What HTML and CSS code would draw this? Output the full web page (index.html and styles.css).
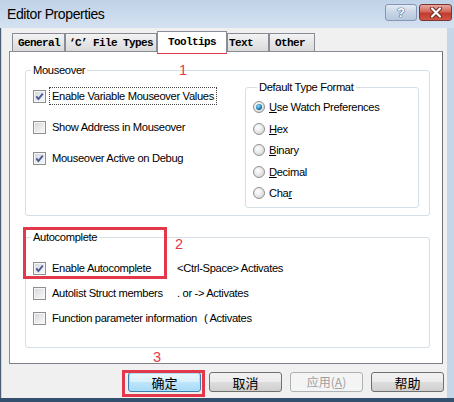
FILE: index.html
```html
<!DOCTYPE html>
<html lang="en">
<head>
<meta charset="utf-8">
<title>Editor Properties</title>
<link rel="stylesheet" href="styles.css">
</head>
<body>
<div class="window">
  <header class="titlebar">
    <span class="title">Editor Properties</span>
    <div class="caption">
      <span class="cap-btn help">?</span>
      <span class="cap-btn close">
        <svg width="14" height="11" viewBox="0 0 14 11"><path d="M3 1.5 L11 9.5 M11 1.5 L3 9.5" stroke="#6b2a22" stroke-width="4" stroke-linecap="round"/><path d="M3 1.5 L11 9.5 M11 1.5 L3 9.5" stroke="#fff" stroke-width="2.2" stroke-linecap="round"/></svg>
      </span>
    </div>
  </header>
  <main class="client">
    <nav class="tabs">
      <span class="tab t-general">General</span>
      <span class="tab t-cfile">‘C’ File Types</span>
      <span class="tab selected">Tooltips</span>
      <span class="tab t-text">Text</span>
      <span class="tab t-other">Other</span>
    </nav>
    <section class="panel">
      <fieldset class="group mouseover">
        <legend class="legend">Mouseover</legend>
        <div class="mo-body">
          <div class="checks">
            <div class="row"><span class="box checked"><svg width="11" height="11" viewBox="0 0 11 11"><path d="M2.3 5.4 L4.4 8 L8.8 2.6" fill="none" stroke="#4a5a98" stroke-width="1.9"/></svg></span><span class="lbl focus">Enable Variable Mouseover Values</span></div>
            <div class="row"><span class="box"></span><span class="lbl">Show Address in Mouseover</span></div>
            <div class="row"><span class="box checked"><svg width="11" height="11" viewBox="0 0 11 11"><path d="M2.3 5.4 L4.4 8 L8.8 2.6" fill="none" stroke="#4a5a98" stroke-width="1.9"/></svg></span><span class="lbl">Mouseover Active on Debug</span></div>
          </div>
          <fieldset class="group format">
            <legend class="legend">Default Type Format</legend>
            <div class="radio-row"><span class="radio on"></span><span class="rlbl"><u>U</u>se Watch Preferences</span></div>
            <div class="radio-row"><span class="radio"></span><span class="rlbl"><u>H</u>ex</span></div>
            <div class="radio-row"><span class="radio"></span><span class="rlbl"><u>B</u>inary</span></div>
            <div class="radio-row"><span class="radio"></span><span class="rlbl"><u>D</u>ecimal</span></div>
            <div class="radio-row"><span class="radio"></span><span class="rlbl">Cha<u>r</u></span></div>
          </fieldset>
        </div>
      </fieldset>
      <fieldset class="group autocomplete">
        <legend class="legend">Autocomplete</legend>
        <div class="checks ac">
          <div class="row"><span class="check"><span class="box checked"><svg width="11" height="11" viewBox="0 0 11 11"><path d="M2.3 5.4 L4.4 8 L8.8 2.6" fill="none" stroke="#4a5a98" stroke-width="1.9"/></svg></span><span class="lbl">Enable Autocomplete</span></span><span class="hint">&lt;Ctrl-Space&gt; Activates</span></div>
          <div class="row"><span class="check"><span class="box"></span><span class="lbl">Autolist Struct members</span></span><span class="hint">. or -&gt; Activates</span></div>
          <div class="row"><span class="check"><span class="box"></span><span class="lbl">Function parameter information</span></span><span class="hint after">( Activates</span></div>
        </div>
      </fieldset>
    </section>
    <footer class="buttons">
      <span class="btn default">确定</span>
      <span class="btn">取消</span>
      <span class="btn disabled">应用(<u>A</u>)</span>
      <span class="btn">帮助</span>
    </footer>
  </main>
  <span class="note n1">1</span>
  <span class="note n2">2</span>
  <span class="note n3">3</span>
  <span class="mark mark-tab"></span>
  <span class="mark mark-ac"></span>
  <span class="mark mark-ok"></span>
</div>
</body>
</html>
```

FILE: styles.css
```css
* { box-sizing: border-box; }
html, body { margin: 0; padding: 0; }
body { width: 454px; height: 402px; overflow: hidden; background: #f0f0f0; }

.window {
  position: relative;
  width: 454px;
  height: 402px;
  display: flex;
  flex-direction: column;
  background: linear-gradient(90deg, #4a5d74 0, #4a5d74 1px, #c6d6e9 1px);
  border-bottom: 4px solid #33506f;
  font-family: "Liberation Sans", Arial, sans-serif;
  font-size: 11.2px;
  letter-spacing: -0.35px;
  color: #000;
}

/* title bar */
.titlebar {
  height: 28px;
  flex: none;
  display: flex;
  justify-content: space-between;
  padding: 0 2px 0 7px;
  background: linear-gradient(#c0d2e8, #d4e1f1);
}
.title { font-size: 14px; letter-spacing: -0.4px; line-height: 29px; }
.caption { display: flex; gap: 2px; margin-top: 4px; height: 17px; }
.cap-btn {
  display: flex; align-items: center; justify-content: center;
  height: 17px; border-radius: 3px;
}
.help {
  width: 32px;
  border: 1px solid #8496b0;
  background: linear-gradient(#e4ebf4, #c7d5e6 50%, #b6c8de);
  color: #fff; font: bold 13px "Liberation Sans", Arial, sans-serif;
  letter-spacing: 0;
  text-shadow: 0 0 1px #3f5473, 0 0 1px #3f5473, 0 0 1px #3f5473;
}
.close {
  width: 33px;
  border: 1px solid #7a3530;
  background: linear-gradient(#e8a89c, #d2675a 45%, #c23a2c 55%, #cf5646);
}

/* client area */
.client {
  flex: 1;
  display: flex;
  flex-direction: column;
  margin: 0 7px 0 2px;
  background: #f0f0f0;
}

.tabs {
  display: flex;
  align-items: flex-end;
  height: 21px;
  margin: 3px 0 -1px 10px;
  position: relative;
  z-index: 1;
  font-family: "Liberation Mono", "Courier New", monospace;
  font-size: 11px;
  font-weight: bold;
  letter-spacing: -0.6px;
}
.tab {
  height: 19px;
  padding: 3px 0 0 5px;
  border: 1px solid #898c95;
  background: linear-gradient(#f3f3f3, #e6e6e6 50%, #dadada);
  white-space: nowrap;
}
.t-general { width: 53px; }
.t-cfile { width: 92px; padding-left: 3px; }
.tab.selected {
  width: 70px;
  height: 22px;
  margin-bottom: -1px;
  padding: 4px 0 0 10px;
  background: #fff;
  border-bottom: none;
}
.t-text { width: 42px; padding-left: 1px; }
.t-other { width: 46px; }

.panel {
  margin: 0 4px 0 7px;
  border: 1px solid #898c95;
  border-right-color: #6e727a;
  border-bottom-color: #7d8189;
  background: #fff;
  padding: 11px 12px 15px 15px;
}

.group {
  margin: 0;
  border: 1px solid #d5dfe5;
  border-radius: 3px;
  padding: 0;
  min-width: 0;
}
.legend {
  margin-left: 5px;
  padding: 0 2px;
  line-height: 14px;
}
.mo-body { display: flex; align-items: flex-start; }
.checks { padding: 9px 0 0 7px; display: flex; flex-direction: column; gap: 11px; }
.row { display: flex; align-items: center; height: 20px; white-space: nowrap; }
.check { display: flex; align-items: center; min-width: 144px; }
.box {
  flex: none;
  width: 13px; height: 13px;
  border: 1px solid #8f8f8f;
  background: linear-gradient(135deg, #d2d5da, #eff0f1 70%, #f8f8f8);
  box-shadow: inset 0 0 0 1px #f6f6f6;
  display: flex; align-items: center; justify-content: center;
}
.lbl {
  margin-left: 3px;
  padding: 1px 2px;
  border: 1px solid transparent;
  line-height: 14px;
}
.lbl.focus { border: 1px dotted #444; }
.hint { line-height: 14px; }
.hint.after { margin-left: 4px; }

.format {
  width: 174px;
  margin: 3px 10px 7px auto;
  padding: 2.25px 0 3.25px 7px;
}
.format .legend { margin-left: 4px; }
.radio-row { display: flex; align-items: center; height: 21.5px; }
.radio {
  flex: none;
  width: 12px; height: 12px;
  border-radius: 50%;
  border: 1px solid #909090;
  background: radial-gradient(circle at 40% 35%, #ffffff, #e2e2e2 60%, #c9c9c9);
  display: flex; align-items: center; justify-content: center;
}
.radio.on::after {
  content: "";
  width: 6px; height: 6px; border-radius: 50%;
  background: radial-gradient(circle at 40% 35%, #9adcf7, #1a7fb8 55%, #0e3d63);
}
.rlbl { margin-left: 4px; line-height: 14px; }

.autocomplete { margin-top: 14px; padding-bottom: 19px; }
.checks.ac { padding-top: 14px; gap: 5px; }

/* buttons */
.buttons {
  display: flex;
  justify-content: flex-end;
  gap: 8px;
  margin-top: 8px;
  padding-right: 3px;
}
.btn {
  width: 73px; height: 20px;
  display: flex; align-items: center; justify-content: center;
  border: 1px solid #707070;
  border-radius: 3px;
  background: linear-gradient(#f2f2f2, #ebebeb 50%, #dddddd 50%, #cfcfcf);
  font-family: "Noto Sans CJK SC", sans-serif;
  font-size: 13px;
  letter-spacing: 0;
  line-height: 1;
}
.btn.default {
  border-color: #3c7fb1;
  background: linear-gradient(#eaf6fd, #d9f0fc 50%, #bee6fd 50%, #a7d9f5);
  box-shadow: inset 0 0 0 1px #aee0f8;
}
.btn.disabled {
  color: #a0a0a0;
  border-color: #adb2b5;
  background: #f4f4f4;
  font-size: 12px;
}
.btn.disabled u { text-decoration: underline; }

/* annotations */
.note {
  position: absolute;
  font-family: "Liberation Sans", Arial, sans-serif;
  font-size: 14.5px;
  line-height: 14.5px;
  letter-spacing: 0;
  color: #e3374b;
}
.n1 { left: 179px; top: 63px; }
.n2 { left: 175px; top: 237px; }
.n3 { left: 153px; top: 350px; }
.mark {
  position: absolute;
  border: 3px solid #e2384a;
}
.mark-tab { left: 157px; top: 31px; width: 70px; height: 23px; }
.mark-ac { left: 23px; top: 227px; width: 144px; height: 52px; }
.mark-ok { left: 122px; top: 370px; width: 83px; height: 27px; }
```
